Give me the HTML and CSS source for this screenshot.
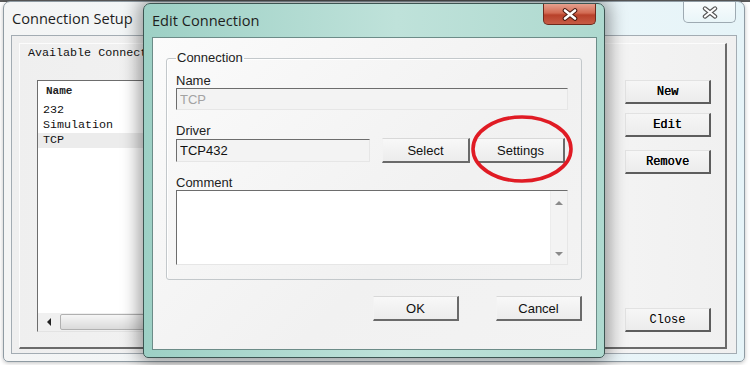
FILE: index.html
```html
<!DOCTYPE html>
<html lang="en">
<head>
    <meta charset="UTF-8">
    <meta name="viewport" content="width=device-width, initial-scale=1.0">
    <title>Edit Connection</title>
    <link rel="stylesheet" href="styles.css">
</head>
<body>
    <div class="desktop">
        <!-- back window -->
        <div class="window setup-window">
            <div class="titlebar">
                <span class="title">Connection Setup</span>
                <span class="close-btn inactive">
                    <svg width="16" height="13" viewBox="0 0 16 13">
                        <path d="M3 2.5 L13 10.5 M13 2.5 L3 10.5" stroke="#555" stroke-width="4.4" stroke-linecap="round"/>
                        <path d="M3 2.5 L13 10.5 M13 2.5 L3 10.5" stroke="#fff" stroke-width="2.2" stroke-linecap="round"/>
                    </svg>
                </span>
            </div>
            <div class="client">
                <div class="panel">
                    <div class="panel-title">Available Connections</div>
                    <div class="panel-body">
                        <div class="listbox">
                            <div class="list-head">Name</div>
                            <ul class="list-items">
                                <li>232</li>
                                <li>Simulation</li>
                                <li class="selected">TCP</li>
                            </ul>
                            <div class="hscroll">
                                <span class="scroll-btn"><span class="arrow-left"></span></span>
                                <span class="thumb"></span>
                            </div>
                        </div>
                        <div class="side-buttons">
                            <button class="btn-classic">New</button>
                            <button class="btn-classic btn-edit">Edit</button>
                            <button class="btn-classic btn-remove">Remove</button>
                            <button class="btn-classic btn-close">Close</button>
                        </div>
                    </div>
                </div>
            </div>
        </div>

        <!-- front dialog -->
        <div class="window edit-window">
            <div class="titlebar">
                <span class="title">Edit Connection</span>
                <span class="close-btn active">
                    <svg width="16" height="13" viewBox="0 0 16 13">
                        <path d="M3 2.5 L13 10.5 M13 2.5 L3 10.5" stroke="#4a1a12" stroke-width="4.6" stroke-linecap="round"/>
                        <path d="M3 2.5 L13 10.5 M13 2.5 L3 10.5" stroke="#fff" stroke-width="2.6" stroke-linecap="round"/>
                    </svg>
                </span>
            </div>
            <div class="client">
                <fieldset class="group">
                    <legend>Connection</legend>
                    <label class="lbl lbl-name">Name</label>
                    <input class="field field-name" type="text" value="TCP" disabled>
                    <label class="lbl lbl-driver">Driver</label>
                    <div class="driver-row">
                        <input class="field field-driver" type="text" value="TCP432" readonly>
                        <button class="btn btn-select">Select</button>
                        <button class="btn btn-settings">Settings</button>
                    </div>
                    <label class="lbl lbl-comment">Comment</label>
                    <div class="memo">
                        <div class="memo-text"></div>
                        <div class="vscroll">
                            <span class="arrow-up"></span>
                            <span class="arrow-down"></span>
                        </div>
                    </div>
                </fieldset>
                <div class="dialog-buttons">
                    <button class="btn">OK</button>
                    <button class="btn">Cancel</button>
                </div>
            </div>
        </div>

        <!-- red marker drawn over the screenshot -->
        <svg class="highlight" width="104" height="70" viewBox="0 0 104 70">
            <ellipse cx="51" cy="34" rx="49" ry="32" fill="none" stroke="#e01b24" stroke-width="3.6"/>
        </svg>
    </div>
</body>
</html>
```

FILE: styles.css
```css
* {
    box-sizing: border-box;
}

body {
    margin: 0;
    background: #fff;
    font-family: "Liberation Sans", Arial, sans-serif;
}

.desktop {
    position: relative;
    width: 750px;
    height: 365px;
    overflow: hidden;
    background: linear-gradient(#5a5a5a, #5a5a5a 2px, #fff 2px);
}

.window {
    position: absolute;
    display: flex;
    flex-direction: column;
}

.titlebar {
    height: 33px;
    flex-shrink: 0;
    display: flex;
    justify-content: space-between;
}

.title {
    font-family: "Open Sans", "Noto Sans", sans-serif;
    font-size: 14.6px;
    line-height: 33px;
    color: #1e1e1e;
}

.close-btn {
    width: 53px;
    height: 21px;
    margin-right: 1px;
    border-radius: 0 0 5px 5px;
    display: flex;
    align-items: center;
    justify-content: center;
}

.close-btn.inactive {
    border: 1px solid #9eaab2;
    border-top: none;
    background: linear-gradient(#f8fcfd, #e9f5f8);
}

.close-btn.active {
    border: 1px solid #6e2a1c;
    border-top: none;
    background: linear-gradient(#e6a08e, #d26a52 45%, #b8412a 55%, #c75c45);
}

.client {
    flex: 1;
    display: flex;
    flex-direction: column;
}

/* ---- Connection Setup (back) ---- */

.setup-window {
    left: 3px;
    top: 1px;
    width: 742px;
    height: 361px;
    padding: 0 7px 7px;
    border: 1px solid #8f9ba3;
    border-radius: 7px 7px 5px 5px;
    background: linear-gradient(to right, #f4f5f5, #eef6f9 60%, #e6f4f8);
    box-shadow: 0 1px 4px rgba(0, 0, 0, 0.25);
}

.setup-window .title {
    padding-left: 1px;
}

.setup-window .client {
    border: 1px solid #a3acb3;
    background: linear-gradient(to right, #efefef, #f6f6f6 70%, #f0f0f0);
}

.panel {
    flex: 1;
    margin: 7px 9px 4px 7px;
    border-style: solid;
    border-width: 1px 2px 2px 1px;
    border-color: #fcfcfc #6b6b6b #6b6b6b #fcfcfc;
}

.panel-title {
    margin: 1px 0 0 8px;
    font-family: "Liberation Mono", monospace;
    font-size: 11.7px;
    line-height: 16px;
    color: #111;
}

.panel-body {
    display: flex;
    padding: 19px 0 0 17px;
}

.listbox {
    width: 553px;
    height: 252px;
    display: flex;
    flex-direction: column;
    border: 1px solid;
    border-color: #6d6d6d #e3e3e3 #e3e3e3 #6d6d6d;
    background: #fff;
}

.list-head {
    height: 18px;
    padding-left: 8px;
    font-family: "Liberation Mono", monospace;
    font-weight: bold;
    font-size: 11px;
    line-height: 20px;
    color: #222;
}

.list-items {
    flex: 1;
    list-style: none;
    margin: 0;
    padding: 4px 0 0;
    font-family: "Liberation Mono", monospace;
    font-size: 11.7px;
    line-height: 15px;
    color: #111;
}

.list-items li {
    height: 15px;
    padding-left: 5px;
}

.list-items .selected {
    background: #ececec;
}

.hscroll {
    height: 18px;
    display: flex;
    background: #f0f0f0;
}

.scroll-btn {
    width: 22px;
    display: flex;
    align-items: center;
    justify-content: center;
}

.arrow-left {
    width: 0;
    height: 0;
    border-top: 4px solid transparent;
    border-bottom: 4px solid transparent;
    border-right: 4px solid #222;
}

.thumb {
    flex: 1;
    margin: 1px 0;
    border: 1px solid #b0b0b0;
    border-radius: 2px;
    background: linear-gradient(#f6f6f6, #dadada);
}

.side-buttons {
    width: 86px;
    height: 252px;
    margin-left: 35px;
    display: flex;
    flex-direction: column;
}

.btn-classic {
    height: 24px;
    padding: 0;
    font-family: "Liberation Mono", monospace;
    font-size: 12px;
    color: #000;
    background: linear-gradient(#f6f6f6, #ececec);
    border-style: solid;
    border-width: 1px 2px 2px 1px;
    border-color: #e2e2e2 #5d5d5d #5d5d5d #e2e2e2;
    text-shadow: 0.3px 0 0 #000;
}

.btn-edit {
    margin-top: 9px;
}

.btn-remove {
    margin-top: 13px;
}

.btn-close {
    margin-top: auto;
    text-shadow: none;
}

/* ---- Edit Connection (front) ---- */

.edit-window {
    left: 143px;
    top: 3px;
    width: 462px;
    height: 355px;
    padding: 0 7px 7px 8px;
    border: 1px solid #3d5552;
    border-radius: 7px 7px 5px 5px;
    background: linear-gradient(to right, #9dd0c5, #bfe2da 55%, #aed9cf);
    box-shadow: 0 0 18px 4px rgba(0, 0, 0, 0.4);
}

.edit-window .client {
    border: 1px solid #6c8c88;
    background: linear-gradient(135deg, #fbfbfb, #f1f1f1 60%, #f3f3f3);
}

.group {
    width: 416px;
    margin: 12px 0 0 13px;
    padding: 0 9px 14px;
    border: 1px solid #c3c8cb;
    border-radius: 3px;
    box-shadow: inset 1px 1px 0 #fff;
}

.group legend {
    padding: 0 1px;
    font-size: 13px;
    line-height: 16px;
    color: #222;
}

.lbl {
    display: block;
    font-size: 13px;
    line-height: 15px;
    color: #222;
}

.lbl-name {
    margin-top: 7px;
}

.lbl-driver {
    margin-top: 13px;
}

.lbl-comment {
    margin-top: 12px;
}

.field {
    display: block;
    height: 22px;
    margin: 0;
    padding: 0 3px;
    font-family: "Liberation Sans", Arial, sans-serif;
    font-size: 13px;
    color: #111;
    background: #f3f3f3;
    border: 1px solid;
    border-color: #6d6d6d #e6e6e6 #e6e6e6 #6d6d6d;
    outline: none;
}

.field-name {
    width: 392px;
    color: #a3a3a3;
}

.driver-row {
    display: flex;
    align-items: flex-start;
}

.field-driver {
    width: 194px;
    height: 23px;
    margin-top: 1px;
}

.btn {
    width: 88px;
    height: 25px;
    padding: 0;
    font-family: "Liberation Sans", Arial, sans-serif;
    font-size: 13px;
    color: #111;
    background: linear-gradient(#f8f8f8, #ececec);
    border-style: solid;
    border-width: 1px 2px 2px 1px;
    border-color: #d8d8d8 #6a6a6a #6a6a6a #f3f3f3;
}

.btn-select {
    margin-left: 12px;
}

.btn-settings {
    margin-left: 7px;
}

.memo {
    width: 392px;
    height: 75px;
    display: flex;
    border: 1px solid;
    border-color: #6d6d6d #e6e6e6 #e6e6e6 #6d6d6d;
    background: #fff;
}

.memo-text {
    flex: 1;
}

.vscroll {
    width: 17px;
    display: flex;
    flex-direction: column;
    justify-content: space-between;
    align-items: center;
    padding: 10px 0 8px;
    background: #f3f3f3;
    border-left: 1px solid #ececec;
}

.arrow-up,
.arrow-down {
    width: 0;
    height: 0;
    border-left: 4px solid transparent;
    border-right: 4px solid transparent;
}

.arrow-up {
    border-bottom: 4px solid #8a8a8a;
}

.arrow-down {
    border-top: 4px solid #8a8a8a;
}

.dialog-buttons {
    width: 416px;
    margin: 16px 0 0 13px;
    display: flex;
    justify-content: flex-end;
    gap: 37px;
}

.dialog-buttons .btn {
    width: 86px;
}

.highlight {
    position: absolute;
    left: 471px;
    top: 115px;
}
```
